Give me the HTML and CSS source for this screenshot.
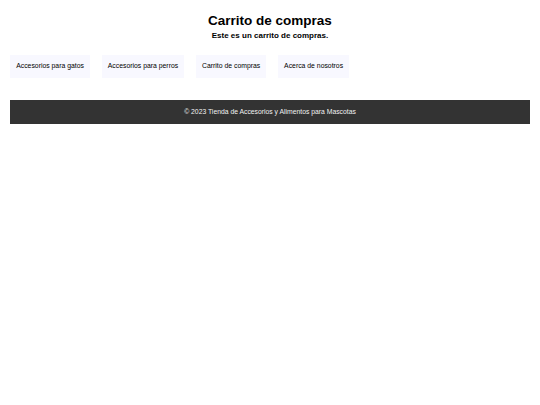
FILE: index.html
```html
<!DOCTYPE html>
<html lang="es">
<head>
<meta charset="utf-8">
<title>Carrito de compras</title>
<link rel="stylesheet" href="styles.css">
</head>
<body>
<header class="header">
  <h1 class="title">Carrito de compras</h1>
  <p class="subtitle">Este es un carrito de compras.</p>
</header>
<nav class="nav">
  <a class="nav-item" href="#">Accesorios para gatos</a>
  <a class="nav-item" href="#">Accesorios para perros</a>
  <a class="nav-item" href="#">Carrito de compras</a>
  <a class="nav-item" href="#">Acerca de nosotros</a>
</nav>
<footer class="footer">© 2023 Tienda de Accesorios y Alimentos para Mascotas</footer>
</body>
</html>
```
FILE: styles.css
```css
html, body {
  margin: 0;
  padding: 0;
  background: #ffffff;
}
body {
  padding: 0 10px;
  font-family: "Liberation Sans", Arial, sans-serif;
  color: #000;
}
.header {
  text-align: center;
}
.title {
  margin: 12.6px 0 0;
  font-size: 13.5px;
  line-height: 15.5px;
  font-weight: bold;
}
.subtitle {
  margin: 2.5px 0 0;
  font-size: 8px;
  line-height: 9.2px;
  font-weight: bold;
}
.nav {
  display: flex;
  gap: 11.5px;
  margin-top: 15.2px;
}
.nav-item {
  display: block;
  background: #f8f8ff;
  color: #000;
  text-decoration: none;
  font-size: 6.85px;
  line-height: 8px;
  padding: 7.5px 6.2px;
}
.footer {
  margin-top: 22px;
  background: #333333;
  color: #f2f2f2;
  text-align: center;
  font-size: 6.8px;
  line-height: 8px;
  padding: 8px 0;
}
```
